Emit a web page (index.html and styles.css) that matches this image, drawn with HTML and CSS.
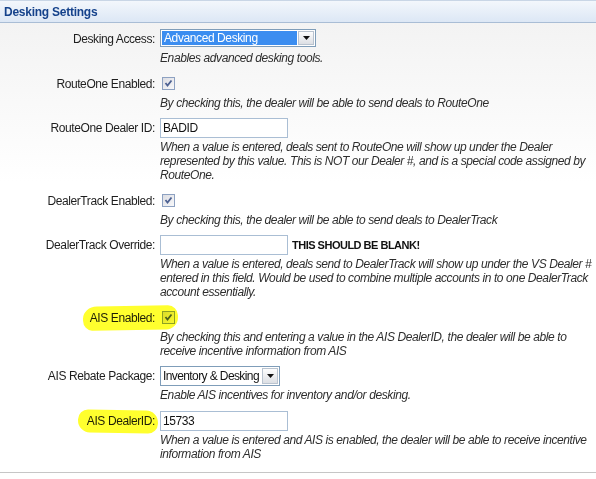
FILE: index.html
```html
<!DOCTYPE html>
<html>
<head>
<meta charset="utf-8">
<link rel="stylesheet" href="styles.css">
</head>
<body>
<div class="panel">
  <div class="header">Desking Settings</div>
  <div class="body">
    <div class="row">
      <div class="label">Desking Access:</div>
      <div class="field">
        <div class="ctl">
          <div class="sel sel-wide">
            <span class="val val-sel">Advanced Desking</span>
            <span class="btn"><svg width="9" height="5" viewBox="0 0 9 5"><polygon points="1,0 8,0 4.5,4" fill="#111"/></svg></span>
          </div>
        </div>
        <div class="desc">Enables advanced desking tools.</div>
      </div>
    </div>

    <div class="row">
      <div class="label">RouteOne Enabled:</div>
      <div class="field">
        <div class="ctl"><span class="cb"><svg width="11" height="11" viewBox="0 0 11 11"><path d="M2.5 5 L4.5 7.5 L8.5 2.5" fill="none" stroke="#4d6192" stroke-width="1.8"/></svg></span></div>
        <div class="desc">By checking this, the dealer will be able to send deals to RouteOne</div>
      </div>
    </div>

    <div class="row">
      <div class="label">RouteOne Dealer ID:</div>
      <div class="field">
        <div class="ctl"><span class="inp">BADID</span></div>
        <div class="desc">When a value is entered, deals sent to RouteOne will show up under the Dealer represented by this value. This is NOT our Dealer #, and is a special code assigned by RouteOne.</div>
      </div>
    </div>

    <div class="row">
      <div class="label">DealerTrack Enabled:</div>
      <div class="field">
        <div class="ctl"><span class="cb"><svg width="11" height="11" viewBox="0 0 11 11"><path d="M2.5 5 L4.5 7.5 L8.5 2.5" fill="none" stroke="#4d6192" stroke-width="1.8"/></svg></span></div>
        <div class="desc">By checking this, the dealer will be able to send deals to DealerTrack</div>
      </div>
    </div>

    <div class="row">
      <div class="label">DealerTrack Override:</div>
      <div class="field">
        <div class="ctl"><span class="inp"></span><span class="warn">THIS SHOULD BE BLANK!</span></div>
        <div class="desc">When a value is entered, deals send to DealerTrack will show up under the VS Dealer # entered in this field. Would be used to combine multiple accounts in to one DealerTrack account essentially.</div>
      </div>
    </div>

    <div class="row">
      <div class="label">AIS Enabled:</div>
      <div class="field">
        <div class="ctl"><span class="cb"><svg width="11" height="11" viewBox="0 0 11 11"><path d="M2.5 5 L4.5 7.5 L8.5 2.5" fill="none" stroke="#4d6192" stroke-width="1.8"/></svg></span></div>
        <div class="desc">By checking this and entering a value in the AIS DealerID, the dealer will be able to receive incentive information from AIS</div>
      </div>
      <span class="hl hl-enabled"></span>
    </div>

    <div class="row">
      <div class="label">AIS Rebate Package:</div>
      <div class="field">
        <div class="ctl">
          <div class="sel sel-narrow">
            <span class="val">Inventory &amp; Desking</span>
            <span class="btn"><svg width="9" height="5" viewBox="0 0 9 5"><polygon points="1,0 8,0 4.5,4" fill="#111"/></svg></span>
          </div>
        </div>
        <div class="desc">Enable AIS incentives for inventory and/or desking.</div>
      </div>
    </div>

    <div class="row">
      <div class="label">AIS DealerID:</div>
      <div class="field">
        <div class="ctl"><span class="inp">15733</span></div>
        <div class="desc">When a value is entered and AIS is enabled, the dealer will be able to receive incentive information from AIS</div>
      </div>
      <span class="hl hl-id"></span>
    </div>
  </div>
</div>
</body>
</html>
```

FILE: styles.css
```css
body {
  margin: 0;
  font-family: "Liberation Sans", Arial, sans-serif;
  font-size: 12px;
  letter-spacing: -0.4px;
  color: #1e1e1e;
  background: #fff;
}

.panel {
  width: 596px;
}

.header {
  height: 21px;
  line-height: 23px;
  padding-left: 4px;
  border-top: 1px solid #c9d6e6;
  border-bottom: 1px solid #a9bdd5;
  background: linear-gradient(#f3f7fc, #dce7f5);
  color: #15428b;
  font-weight: bold;
  letter-spacing: -0.25px;
}

.body {
  padding: 6px 0 11px;
  border-bottom: 1px solid #c6c6c6;
  background: linear-gradient(#f3f3f3, #ffffff 160px);
}

.row {
  position: relative;
  display: grid;
  grid-template-columns: 160px 436px;
  margin-bottom: 8.5px;
}

.row:last-child {
  margin-bottom: 0;
}

.label {
  text-align: right;
  padding-right: 5px;
  line-height: 20px;
  color: #1e1e1e;
}

.ctl {
  height: 20px;
  display: flex;
  align-items: center;
}

.desc {
  margin-top: 2px;
  line-height: 14px;
  font-style: italic;
  color: #2e2e2e;
}

.cb {
  width: 11px;
  height: 11px;
  margin-left: 2px;
  border: 1px solid #8da1c1;
  background: linear-gradient(135deg, #dcdde3, #f8f8fa);
  display: flex;
}

.inp {
  box-sizing: border-box;
  width: 128px;
  height: 20px;
  border: 1px solid #aabed4;
  background: #fff;
  padding-left: 2px;
  line-height: 18px;
  color: #111;
}

.warn {
  margin-left: 4px;
  font-size: 11px;
  font-weight: bold;
  letter-spacing: -0.5px;
  color: #111;
}

.sel {
  box-sizing: border-box;
  display: flex;
  border: 1px solid #7f9db9;
  background: #fff;
  white-space: nowrap;
}

.sel-wide {
  width: 156px;
  height: 18px;
  margin-top: -2px;
}

.sel-narrow {
  width: 120px;
  height: 20px;
  letter-spacing: -0.6px;
}

.val {
  flex: 1;
  padding-left: 2px;
  display: flex;
  align-items: center;
  color: #111;
  overflow: hidden;
}

.val-sel {
  margin: 1px;
  background: #3b8df0;
  color: #fff;
}

.btn {
  width: 16px;
  margin: 1px 1px 1px 0;
  box-sizing: border-box;
  border: 1px solid #b9c3cf;
  background: linear-gradient(#fdfdfd, #dcdfe4);
  display: flex;
  align-items: center;
  justify-content: center;
}

.hl {
  position: absolute;
  background: #ffff2e;
  mix-blend-mode: multiply;
}

.hl-enabled {
  left: 83px;
  top: -2px;
  width: 95px;
  height: 24px;
  border-radius: 14px 10px 12px 9px / 12px 10px 12px 10px;
  transform: rotate(-1deg);
}

.hl-id {
  left: 78px;
  top: -1px;
  width: 80px;
  height: 23px;
  border-radius: 10px 12px 10px 12px / 10px 12px 10px 12px;
  transform: rotate(1deg);
}
```
